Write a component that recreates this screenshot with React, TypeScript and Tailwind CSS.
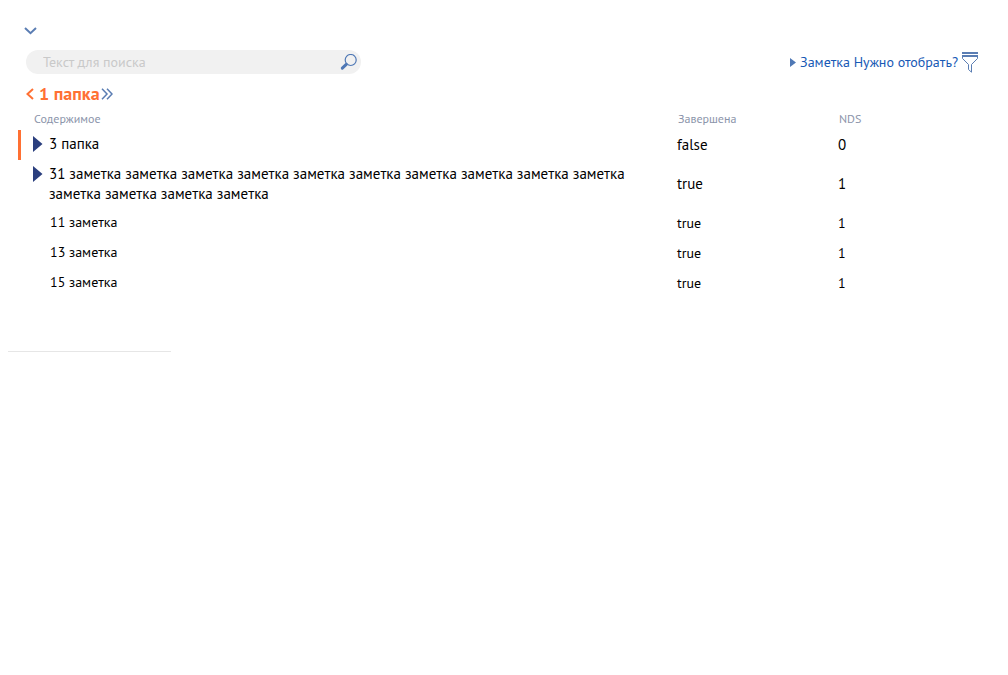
type Row = {
  title: string;
  done: string;
  nds: string;
  folder?: boolean;
  selected?: boolean;
  tall?: boolean;
};

const rows: Row[] = [
  { title: "3 папка", done: "false", nds: "0", folder: true, selected: true },
  {
    title:
      "31 заметка заметка заметка заметка заметка заметка заметка заметка заметка заметка заметка заметка заметка заметка",
    done: "true",
    nds: "1",
    folder: true,
    tall: true,
  },
  { title: "11 заметка", done: "true", nds: "1" },
  { title: "13 заметка", done: "true", nds: "1" },
  { title: "15 заметка", done: "true", nds: "1" },
];

function SearchIcon() {
  return (
    <svg width="17" height="17" viewBox="0 0 17 17" fill="none" stroke="#4f78b5">
      <circle cx="10.7" cy="6" r="5.5" strokeWidth="1.2" />
      <path d="M6.3 10.4 2.3 14.2" strokeWidth="3" strokeLinecap="round" />
    </svg>
  );
}

function FilterIcon() {
  return (
    <svg width="17" height="21" viewBox="0 0 17 21" fill="none" stroke="#5a7db3">
      <path d="M0 1h16M0 4h16" strokeWidth="2" />
      <path d="M.5 4.8v1.7l6 6v5l3 2.7v-7.7l6-6v-1.7" strokeWidth="1" />
    </svg>
  );
}

function TableRow({ row }: { row: Row }) {
  const size = row.folder ? "text-[15px]" : "text-[14px]";
  return (
    <tr className={row.tall ? "h-12" : "h-[30px]"}>
      <td
        className={`border-l-[3px] p-0 pr-2 align-middle ${row.tall ? "" : "pb-[2px]"} ${row.selected ? "border-[#ff7033]" : "border-transparent"}`}
      >
        <div className={`flex leading-5 ${size}`}>
          {row.folder ? (
            <button type="button" aria-label="Открыть" className="ml-3 flex h-5 w-4 shrink-0 items-center">
              <svg width="10" height="16" viewBox="0 0 10 16">
                <path d="M0 0l9.5 8L0 16z" fill="#2b3f7e" />
              </svg>
            </button>
          ) : (
            <span className="w-7 shrink-0" />
          )}
          <span className={row.folder ? "" : "pl-px"}>{row.title}</span>
        </div>
      </td>
      <td className={`p-0 pl-2 align-middle leading-5 ${size}`}>{row.done}</td>
      <td className={`p-0 pl-2 align-middle leading-5 ${size}`}>{row.nds}</td>
    </tr>
  );
}

export default function App() {
  return (
    <main className="min-h-screen bg-white pt-6 font-['PT_Sans','Roboto','Noto_Sans',sans-serif] text-black">
      <div className="pr-[29px] pl-6">
        <button type="button" aria-label="Свернуть" className="flex h-[14px] w-[14px] items-center">
          <svg width="13" height="8" viewBox="0 0 13 8" fill="none" stroke="#5a7db3" strokeWidth="2">
            <path d="M1 1l5.5 5.2L12 1" />
          </svg>
        </button>
        <div className="mt-3 flex h-6 items-center justify-between pl-[2px]">
          <form role="search" className="flex h-6 w-[335px] items-center rounded-full bg-[#f1f1f1] pr-1 pl-[17px]">
            <input
              type="text"
              aria-label="Текст для поиска"
              placeholder="Текст для поиска"
              className="min-w-0 flex-1 bg-transparent text-[14px] leading-5 outline-none placeholder:text-[#c9c9c9]"
            />
            <button type="button" aria-label="Найти">
              <SearchIcon />
            </button>
          </form>
          <div className="flex items-center">
            <svg width="6" height="9" viewBox="0 0 6 9" className="mr-1">
              <path d="M0 0l6 4.5L0 9z" fill="#4f78b5" />
            </svg>
            <a href="#filter" className="mr-1 text-[14px] leading-5 text-[#1759b5]">
              Заметка Нужно отобрать?
            </a>
            <button type="button" aria-label="Фильтр">
              <FilterIcon />
            </button>
          </div>
        </div>
        <nav className="mt-2 flex h-6 items-center pl-[2px]">
          <a href="#parent" className="flex items-center text-[18px] leading-6 font-bold text-[#ff7033]">
            <svg width="8" height="12" viewBox="0 0 8 12" fill="none" stroke="#ff7033" strokeWidth="2" className="mr-[5px]">
              <path d="M7 1L1.5 6 7 11" />
            </svg>
            1 папка
          </a>
          <button type="button" aria-label="Далее" className="ml-px">
            <svg width="12" height="12" viewBox="0 0 12 12" fill="none" stroke="#5a7db3" strokeWidth="1.5">
              <path d="M1 .8L6 6l-5 5.2M6 .8L11 6l-5 5.2" />
            </svg>
          </button>
        </nav>
      </div>
      <div className="mt-1 pl-[18px]">
        <table className="w-full table-fixed border-separate border-spacing-0">
          <colgroup>
            <col />
            <col className="w-[161px]" />
            <col className="w-[178px]" />
          </colgroup>
          <thead>
            <tr className="h-5 text-left text-[12px] leading-4 text-[#8b94aa]">
              <th className="p-0 pb-[2px] pl-4 font-normal">Содержимое</th>
              <th className="p-0 pb-[2px] pl-[9px] font-normal">Завершена</th>
              <th className="p-0 pb-[2px] pl-[9px] font-normal">NDS</th>
            </tr>
          </thead>
          <tbody>
            {rows.map((row) => (
              <TableRow key={row.title} row={row} />
            ))}
          </tbody>
        </table>
      </div>
      <hr className="mt-[53px] ml-2 w-[163px] border-[#e6e6e6]" />
    </main>
  );
}
